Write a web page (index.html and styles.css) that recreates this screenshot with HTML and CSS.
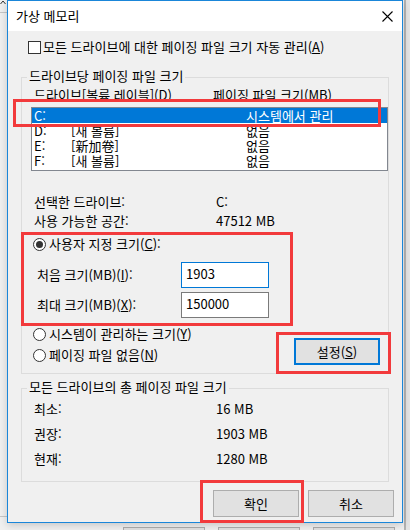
FILE: index.html
```html
<!DOCTYPE html>
<html lang="ko">
<head>
<meta charset="utf-8">
<title>가상 메모리</title>
<link rel="stylesheet" href="styles.css">
</head>
<body>
<div class="desk-line desk-top"></div>
<svg class="desk-caret" width="7" height="5" viewBox="0 0 7 5"><path d="M0.5 4 L3 1 L5.5 4" fill="none" stroke="#333" stroke-width="1"/></svg>
<div class="desk-line desk-bottom"></div>
<div class="desk-strip"></div>
<div class="desk-btns">
  <span class="desk-btn"></span><span class="desk-btn"></span><span class="desk-btn"></span>
</div>

<div class="dialog">
  <div class="titlebar">
    <span class="title">가상 메모리</span>
    <svg class="close" width="11" height="11" viewBox="0 0 11 11"><path d="M0.5 0.5 L10.5 10.5 M10.5 0.5 L0.5 10.5" stroke="#000" stroke-width="1.1" fill="none"/></svg>
  </div>
  <div class="content">
    <div class="check-row"><span class="checkbox"></span><span>모든 드라이브에 대한 페이징 파일 크기 자동 관리(<u>A</u>)</span></div>

    <fieldset class="group g1">
      <legend>드라이브당 페이징 파일 크기</legend>
      <div class="list-head"><span class="hc1">드라이브[볼륨 레이블](<u>D</u>)</span><span>페이징 파일 크기(MB)</span></div>
      <div class="listbox">
        <div class="lrow sel"><span class="drv">C:</span><span class="vol"></span><span>시스템에서 관리</span></div>
        <div class="lrow"><span class="drv">D:</span><span class="vol">[새 볼륨]</span><span>없음</span></div>
        <div class="lrow"><span class="drv">E:</span><span class="vol">[新加卷]</span><span>없음</span></div>
        <div class="lrow"><span class="drv">F:</span><span class="vol">[새 볼륨]</span><span>없음</span></div>
      </div>
      <div class="info">
        <div class="irow"><span class="ilabel">선택한 드라이브:</span><span>C:</span></div>
        <div class="irow"><span class="ilabel">사용 가능한 공간:</span><span>47512 MB</span></div>
      </div>
      <div class="radio-row first"><span class="radio on"></span><span>사용자 지정 크기(<u>C</u>):</span></div>
      <div class="field-row f1"><span class="flabel">처음 크기(MB)(<u>I</u>):</span><span class="input focus">1903</span></div>
      <div class="field-row f2"><span class="flabel">최대 크기(MB)(<u>X</u>):</span><span class="input">150000</span></div>
      <div class="bottom-row">
        <div class="radios">
          <div class="radio-row"><span class="radio"></span><span>시스템이 관리하는 크기(<u>Y</u>)</span></div>
          <div class="radio-row"><span class="radio"></span><span>페이징 파일 없음(<u>N</u>)</span></div>
        </div>
        <button class="btn default">설정(<u>S</u>)</button>
      </div>
    </fieldset>

    <fieldset class="group g2">
      <legend>모든 드라이브의 총 페이징 파일 크기</legend>
      <div class="irow2"><span class="ilabel">최소:</span><span>16 MB</span></div>
      <div class="irow2"><span class="ilabel">권장:</span><span>1903 MB</span></div>
      <div class="irow2"><span class="ilabel">현재:</span><span>1280 MB</span></div>
    </fieldset>

    <div class="actions">
      <button class="btn">확인</button>
      <button class="btn">취소</button>
    </div>
  </div>
</div>

<div class="mark m1"></div>
<div class="mark m2"></div>
<div class="mark m3"></div>
<div class="mark m4"></div>
</body>
</html>
```
FILE: styles.css
```css
* { box-sizing: border-box; }

body {
  margin: 0;
  width: 410px;
  height: 530px;
  position: relative;
  overflow: hidden;
  background: #f0f0f0;
  font-family: "Noto Sans CJK KR", "Noto Sans", sans-serif;
  font-size: 13px;
  color: #000;
}

u { text-decoration: underline; text-underline-offset: 1px; }

/* desktop behind the dialog */
.desk-line { position: absolute; left: 0; width: 7px; height: 1px; background: #c6c6c6; }
.desk-top { top: 12px; }
.desk-bottom { top: 516px; }
.desk-caret { position: absolute; left: 0; top: 0; }
.desk-strip {
  position: absolute; left: 404px; top: 0; width: 6px; height: 530px;
  background: #e4e4e4; border-left: 2px solid #b3b3b3;
}
.desk-btns { position: absolute; left: 123px; top: 527px; display: flex; gap: 13px; }
.desk-btn { width: 82px; height: 10px; background: #e1e1e1; border: 1px solid #adadad; }

/* dialog window */
.dialog {
  position: absolute;
  left: 7px;
  top: 0;
  width: 396px;
  height: 523px;
  border: 1px solid #1a86d9;
  background: #f0f0f0;
  box-shadow: 0 2px 8px rgba(0, 0, 0, 0.18);
  display: flex;
  flex-direction: column;
}

.titlebar {
  height: 30px;
  flex: none;
  background: #fff;
  display: flex;
  align-items: center;
  justify-content: space-between;
  padding: 0 9px 0 8px;
}
.title { line-height: 14px; }
.close { display: block; }

.content { flex: 1; padding-top: 9px; }

.check-row {
  display: flex;
  align-items: center;
  gap: 2px;
  margin-left: 20px;
  height: 14px;
  line-height: 14px;
}
.checkbox {
  width: 13px; height: 13px;
  border: 1px solid #333;
  background: #fff;
  flex: none;
}

.group {
  margin: 15px 13px 0;
  padding: 0;
  border: 1px solid #dcdcdc;
  min-width: 0;
}
.group legend {
  margin-left: 5px;
  padding: 0 2px 2px;
  line-height: 14px;
}

.list-head {
  display: flex;
  padding: 3px 0 0 12px;
  line-height: 14px;
}
.hc1 { width: 179px; }

.listbox {
  margin: 5px 0 0 9px;
  width: 357px;
  height: 64px;
  border: 1px solid #828790;
  background: #fff;
}
.lrow {
  display: flex;
  height: 15px;
  line-height: 15px;
  padding-left: 2px;
}
.lrow.sel { background: #0078d7; color: #fff; }
.drv { width: 37px; }
.vol { width: 175px; }

.info { margin-top: 21px; }
.irow { display: flex; line-height: 19px; padding-left: 12px; }
.ilabel { width: 182px; }

.radio-row {
  display: flex;
  align-items: center;
  gap: 3px;
  height: 14px;
  line-height: 14px;
  padding-left: 11px;
}
.radio-row.first { margin-top: 7px; }
.radio {
  width: 13px; height: 13px;
  border: 1px solid #333;
  border-radius: 50%;
  background: #fff;
  flex: none;
  display: flex;
  align-items: center;
  justify-content: center;
}
.radio.on::after {
  content: "";
  width: 7px; height: 7px;
  border-radius: 50%;
  background: #333;
}

.field-row {
  display: flex;
  align-items: center;
  height: 26px;
  padding-left: 15px;
}
.field-row.f1 { margin-top: 11px; }
.field-row.f2 { margin-top: 4px; }
.flabel { width: 144px; line-height: 14px; }
.input {
  width: 88px;
  height: 26px;
  border: 1px solid #7a7a7a;
  background: #fff;
  padding-left: 4px;
  line-height: 22px;
}
.input.focus { border-color: #0078d7; }

.bottom-row {
  display: flex;
  justify-content: space-between;
  align-items: flex-start;
  margin-top: 9px;
  padding: 0 8px 8px 0;
}
.radios { display: flex; flex-direction: column; gap: 7px; }

.btn {
  width: 86px;
  height: 27px;
  background: #e1e1e1;
  border: 1px solid #adadad;
  font: inherit;
  color: #000;
  padding: 0;
  line-height: 14px;
}
.btn.default { margin-top: 11px; border: 2px solid #0078d7; }

.g2 { margin-top: 6px; padding-bottom: 10px; }
.irow2 { display: flex; line-height: 25px; padding-left: 12px; }

.actions {
  display: flex;
  justify-content: flex-end;
  gap: 9px;
  margin: 8px 8px 0 0;
}

/* red annotation boxes */
.mark { position: absolute; border: 3px solid #f23a3c; }
.m1 { left: 13px; top: 99px; width: 368px; height: 28px; }
.m2 { left: 21px; top: 232px; width: 272px; height: 94px; }
.m3 { left: 276px; top: 332px; width: 115px; height: 42px; }
.m4 { left: 200px; top: 480px; width: 104px; height: 43px; }
```
